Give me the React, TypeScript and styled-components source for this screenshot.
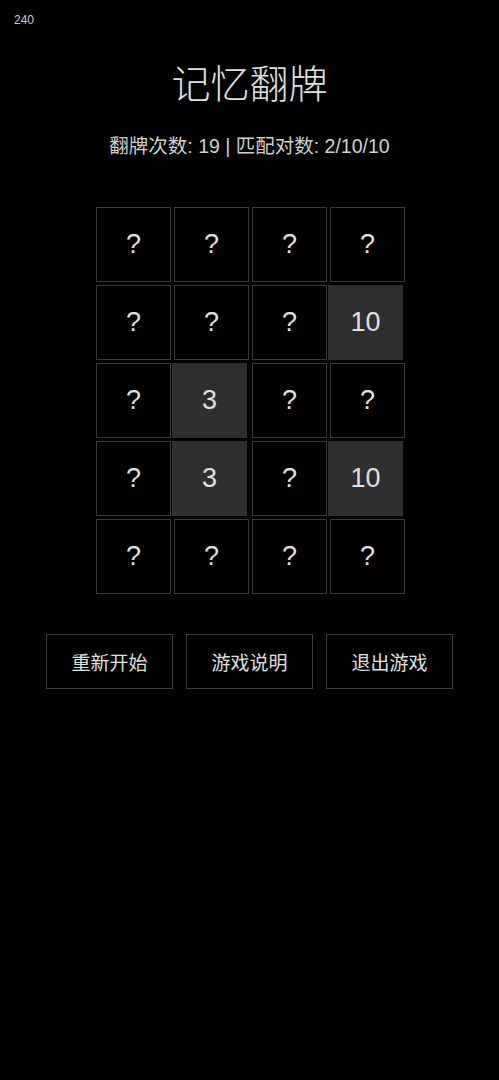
import React from 'react';
import styled, { createGlobalStyle } from 'styled-components';

const GlobalStyle = createGlobalStyle`
  html, body {
    margin: 0;
    padding: 0;
    background: #000;
  }
  body {
    font-family: 'Liberation Sans', Arial, 'Noto Sans CJK SC', sans-serif;
    color: #ddd;
  }
`;

const Page = styled.div`
  min-height: 1080px;
  background: #000;
  position: relative;
  display: flex;
  flex-direction: column;
  align-items: center;
`;

const Fps = styled.div`
  position: absolute;
  left: 14px;
  top: 13px;
  font-size: 12px;
  color: #ccc;
`;

const Title = styled.h1`
  margin: 57px 0 0;
  font-size: 39px;
  font-weight: 300;
  line-height: 48px;
  color: #e0e0e0;
  font-family: 'Noto Sans CJK SC', sans-serif;
`;

const Stats = styled.div`
  margin-top: 29px;
  font-size: 19.5px;
  line-height: 24px;
  color: #d0d0d0;
`;

const Board = styled.div`
  margin-top: 49px;
  display: grid;
  grid-template-columns: repeat(4, 75px);
  grid-auto-rows: 75px;
  gap: 3px;
  margin-left: 2px;
`;

const Card = styled.div<{ $flipped?: boolean }>`
  box-sizing: border-box;
  display: flex;
  align-items: center;
  justify-content: center;
  font-size: 27px;
  color: #e0e0e0;
  background: ${(p) => (p.$flipped ? '#2f2f2f' : '#000')};
  border: 1px solid ${(p) => (p.$flipped ? '#2f2f2f' : '#3a3a3a')};
  transform: ${(p) => (p.$flipped ? 'translateX(-2px)' : 'none')};
`;

const Actions = styled.div`
  margin-top: 40px;
  display: flex;
  gap: 13px;
`;

const Button = styled.button`
  box-sizing: border-box;
  width: 127px;
  height: 55px;
  background: #000;
  border: 1px solid #3c3c3c;
  color: #e0e0e0;
  font-size: 19px;
  font-family: 'Noto Sans CJK SC', sans-serif;
  cursor: pointer;
`;

const cards: (string | null)[] = [
  null, null, null, null,
  null, null, null, '10',
  null, '3', null, null,
  null, '3', null, '10',
  null, null, null, null,
];

export default function App() {
  return (
    <Page>
      <GlobalStyle />
      <Fps>240</Fps>
      <Title>记忆翻牌</Title>
      <Stats>翻牌次数: 19 | 匹配对数: 2/10/10</Stats>
      <Board>
        {cards.map((v, i) => (
          <Card key={i} $flipped={v !== null}>
            {v ?? '?'}
          </Card>
        ))}
      </Board>
      <Actions>
        <Button>重新开始</Button>
        <Button>游戏说明</Button>
        <Button>退出游戏</Button>
      </Actions>
    </Page>
  );
}
